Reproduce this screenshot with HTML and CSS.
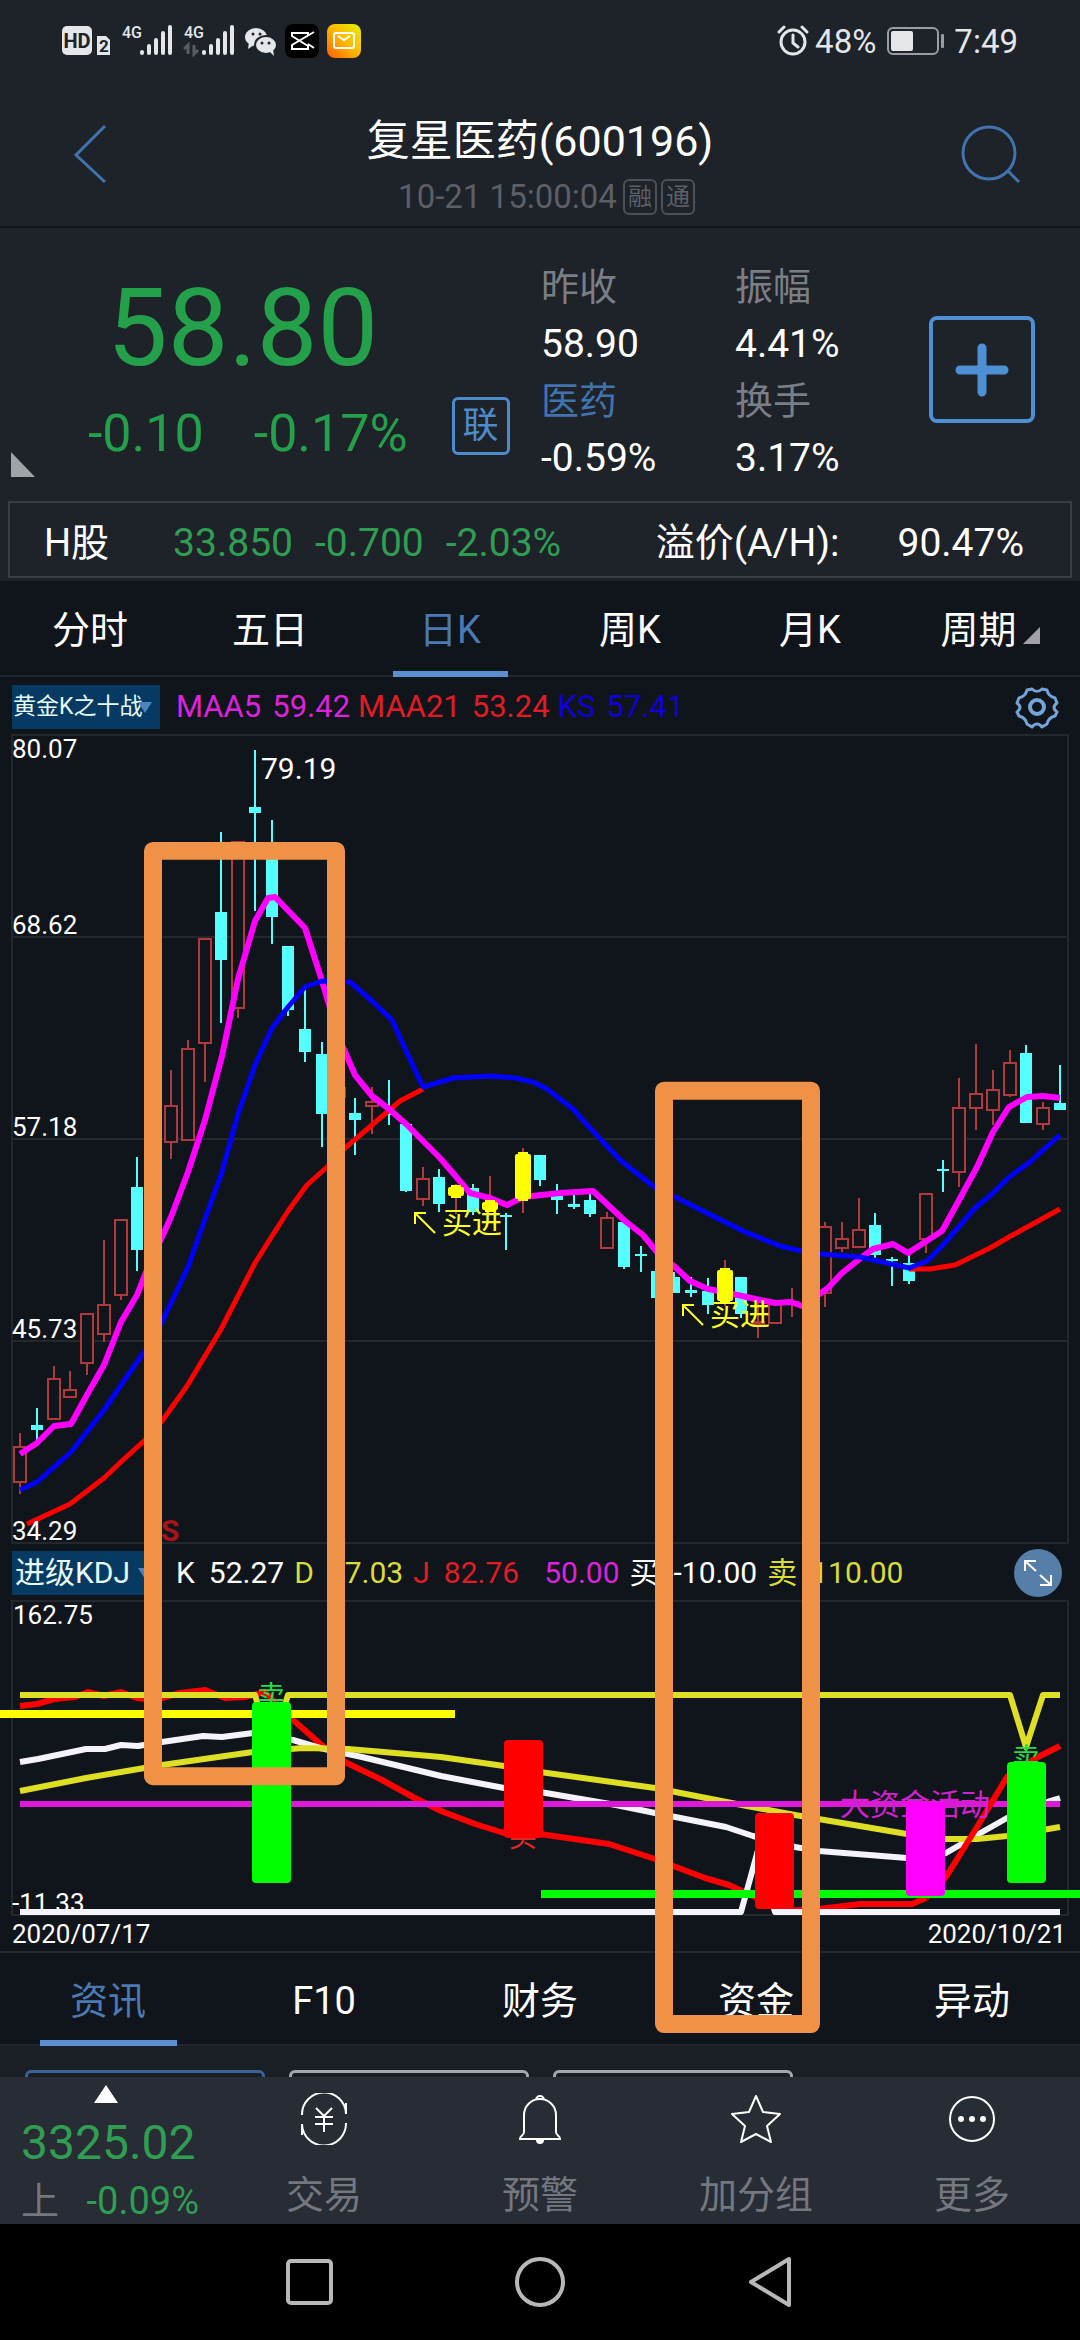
FILE: index.html
```html
<!DOCTYPE html>
<html lang="zh-CN">
<head>
<meta charset="utf-8">
<meta name="viewport" content="width=device-width">
<title>复星医药(600196)</title>
<link rel="stylesheet" href="styles.css">
</head>
<body>
<div class="statusbar">
  <div class="status-left">
    <svg width="50" height="34" viewBox="0 0 50 34" aria-hidden="true">
      <rect x="1" y="2" width="30" height="29" rx="5" fill="#e4e6ea"/>
      <text x="16" y="24" text-anchor="middle" font-size="20" font-weight="700" fill="#1e2229">HD</text>
      <path d="M36 12h9l4 4v15H36z" fill="#e4e6ea"/>
      <text x="43" y="28" text-anchor="middle" font-size="17" font-weight="700" fill="#1e2229">2</text>
    </svg>
    <svg class="signal" width="52" height="34" viewBox="0 0 52 34" aria-hidden="true">
      <text x="1" y="14" font-size="16" font-weight="500" fill="#e4e6ea">4G</text>
      <path d="M21 28v1M28 22v7M35 16v13M42 9v20M49 3v26" stroke="#e4e6ea" stroke-width="4" stroke-linecap="round"/>
    </svg>
    <svg class="signal" width="52" height="34" viewBox="0 0 52 34" aria-hidden="true">
      <text x="1" y="14" font-size="16" font-weight="500" fill="#e4e6ea">4G</text>
      <path d="M5 30V21l-4 4M11 21v9l4-4" stroke="#595d64" stroke-width="3" fill="none"/>
      <path d="M21 28v1M28 22v7M35 16v13M42 9v20M49 3v26" stroke="#e4e6ea" stroke-width="4" stroke-linecap="round"/>
    </svg>
    <svg width="32" height="34" viewBox="0 0 32 34" aria-hidden="true">
      <ellipse cx="11" cy="13" rx="11" ry="9" fill="#e4e6ea"/>
      <path d="M4 18l-1 7 6-4z" fill="#e4e6ea"/>
      <ellipse cx="21" cy="21" rx="11" ry="9" fill="#e4e6ea" stroke="#1e2229" stroke-width="2"/>
      <path d="M24 27l5 5-1-7z" fill="#e4e6ea"/>
      <circle cx="8" cy="10" r="1.500" fill="#1e2229"/><circle cx="15" cy="10" r="1.500" fill="#1e2229"/>
      <circle cx="17" cy="19" r="1.500" fill="#1e2229"/><circle cx="24" cy="19" r="1.500" fill="#1e2229"/>
    </svg>
    <svg class="app" width="34" height="34" viewBox="0 0 34 34" aria-hidden="true">
      <rect width="34" height="34" rx="8" fill="#000"/>
      <path d="M29 8L7 21v4h16v-3L7 12V9h16v3M23 20l6 4" fill="none" stroke="#fff" stroke-width="2"/>
    </svg>
    <svg class="app" width="34" height="34" viewBox="0 0 34 34" aria-hidden="true">
      <defs><linearGradient id="mail" x1="1" y1="0" x2="0" y2="1"><stop offset="0" stop-color="#e0f000"/><stop offset=".5" stop-color="#ffb800"/><stop offset="1" stop-color="#ff5a00"/></linearGradient></defs>
      <rect width="34" height="34" rx="8" fill="url(#mail)"/>
      <rect x="7" y="9" width="20" height="15" rx="2" fill="none" stroke="#fff" stroke-width="2"/>
      <path d="M11 12l6 4 6-4" fill="none" stroke="#fff" stroke-width="2"/>
    </svg>
  </div>
  <div class="status-right">
    <svg width="32" height="32" viewBox="0 0 32 32" fill="none" stroke="#e4e6ea" stroke-width="3" stroke-linecap="round" aria-hidden="true">
      <circle cx="16" cy="17" r="12"/><path d="M16 10v8l5 4M2 7l5-5M30 7l-5-5"/>
    </svg>
    <span>48%</span>
    <svg class="battery" width="58" height="28" viewBox="0 0 58 28" aria-hidden="true">
      <rect x="1" y="1" width="50" height="26" rx="5" fill="none" stroke="#9a9da3" stroke-width="2"/>
      <rect x="4" y="4" width="22" height="20" rx="2" fill="#e4e6ea"/>
      <rect x="54" y="7" width="3" height="14" rx="1" fill="#9a9da3"/>
    </svg>
    <span>7:49</span>
  </div>
</div>

<header class="header">
  <button class="icon-btn" aria-label="返回"><svg width="34" height="60" viewBox="0 0 34 60"><path d="M32 2L3 31l29 27" fill="none" stroke="#4173ad" stroke-width="3"/></svg></button>
  <div class="heading">
    <h1>复星医药(600196)</h1>
    <p class="stamp"><span>10-21 15:00:04</span><i class="tag">融</i><i class="tag">通</i></p>
  </div>
  <button class="icon-btn search" aria-label="搜索"><svg width="60" height="60" viewBox="0 0 60 60"><circle cx="29" cy="29" r="26" fill="none" stroke="#4173ad" stroke-width="3"/><path d="M48 47l11 11" stroke="#4173ad" stroke-width="3"/></svg></button>
</header>

<section class="quote">
  <div class="price-block">
    <div class="price">58.80</div>
    <div class="change"><span class="delta">-0.10</span><span class="percent">-0.17%</span><button class="link-btn">联</button></div>
    <svg class="corner" width="24" height="25" viewBox="0 0 24 25" aria-hidden="true"><path d="M0 0l24 25H0z" fill="#a0a3a8"/></svg>
  </div>
  <dl class="stats">
    <div><dt>昨收</dt><dd>58.90</dd></div>
    <div><dt>振幅</dt><dd>4.41%</dd></div>
    <div><dt><a href="#sector">医药</a></dt><dd>-0.59%</dd></div>
    <div><dt>换手</dt><dd>3.17%</dd></div>
  </dl>
  <button class="add-btn" aria-label="添加自选"><svg width="54" height="54" viewBox="0 0 54 54"><path d="M27 5v44M5 27h44" stroke="#4e8fd6" stroke-width="9" stroke-linecap="round"/></svg></button>
</section>

<div class="hshare-wrap">
  <div class="hshare">
    <span class="name">H股</span>
    <span class="down">33.850</span><span class="down">-0.700</span><span class="down">-2.03%</span>
    <span class="premium">溢价(A/H):</span><span class="ratio">90.47%</span>
  </div>
</div>

<nav class="tabs periods">
  <button>分时</button><button>五日</button><button class="active">日K</button><button>周K</button><button>月K</button>
  <button>周期<svg width="17" height="17" viewBox="0 0 17 17" aria-hidden="true"><path d="M17 0v17H0z" fill="#a3a0a8"/></svg></button>
</nav>

<div class="workspace">
  <div class="readout main-readout">
    <label class="picker"><select aria-label="主图指标"><option>黄金K之十战</option></select></label>
    <span class="value magenta"><b>MAA5</b><b>59.42</b></span>
    <span class="value red"><b>MAA21</b><b>53.24</b></span>
    <span class="value blue"><b>KS</b><b>57.41</b></span>
    <button class="gear" aria-label="设置"><svg width="46" height="46" viewBox="-23 -23 46 46" fill="none" stroke="#74a5d8" stroke-width="3" stroke-linejoin="round"><path d="M-5-18C-2-15 2-15 5-18L10-17C11-12 14-10 18-9L20-4C16-1 16 2 20 5L18 9C14 10 11 12 10 17L5 20C2 16-2 16-5 20L-10 17C-11 12-14 10-18 9L-20 5C-16 2-16-1-20-4L-18-9C-14-10-11-12-10-17Z"/><circle r="7" stroke-width="4"/></svg></button>
  </div>

  <svg class="chart" viewBox="0 732 1080 812" role="img" aria-label="日K线">
    <path class="grid" d="M12 735H1068V1543H12ZM12 937H1068M12 1139H1068M12 1341H1068"/>
    <g id="candles"></g>
    <polyline class="ma red" points="27,1524 70,1504 104,1478 123,1460 145,1440 162,1421 187,1386 220,1331 255,1263 272,1236 288,1211 307,1185 327,1167 345,1148 372,1125 400,1101 423,1089"/>
    <polyline class="ma red" points="909,1269 930,1269 955,1265 990,1248 1009,1237 1040,1220 1060,1209"/>
    <polyline class="ma magenta" points="20,1454 37,1443 54,1426 71,1424 88,1393 104,1365 121,1322 137,1295 150,1262 162,1237 171,1217 188,1172 205,1120 222,1056 238,979 255,921 268,898 275,897 305,928 322,981 339,1038 355,1075 372,1096 389,1109 406,1124 440,1158 470,1193 490,1198 507,1205 523,1197 560,1193 593,1191 625,1221 643,1235 657,1252 674,1266 690,1281 708,1289 724,1292 760,1300 775,1303 791,1302 802,1306 828,1288 842,1273 862,1257 873,1249 893,1244 908,1253 942,1231 958,1202 977,1167 993,1132 1009,1107 1027,1097 1043,1096 1060,1098"/>
    <polyline class="ma blue" points="20,1490 37,1482 71,1452 104,1410 121,1385 144,1352 162,1322 188,1267 205,1219 222,1172 238,1114 255,1065 272,1028 288,1007 305,987 322,981 350,982 372,1001 392,1020 407,1053 423,1087 453,1078 490,1076 515,1078 533,1082 547,1089 573,1109 590,1128 620,1160 653,1186 677,1198 743,1231 780,1246 797,1250 820,1254 860,1257 887,1263 909,1268 927,1261 943,1245 975,1208 993,1193 1009,1177 1030,1162 1043,1150 1060,1135"/>
    <g id="signals"></g>
    <g class="buy">
      <path d="M435 1233L415 1213M415 1224V1213H426M703 1325L683 1305M683 1316V1305H694"/>
      <text x="442" y="1233">买进</text><text x="710" y="1325">买进</text>
    </g>
    <text class="sell-mark" x="161" y="1541">S</text>
    <text class="peak" x="261" y="779">79.19</text>
    <g class="axis">
      <text x="12" y="758">80.07</text><text x="12" y="934">68.62</text><text x="12" y="1136">57.18</text><text x="12" y="1338">45.73</text><text x="12" y="1540">34.29</text>
    </g>
  </svg>

  <div class="readout sub-readout">
    <label class="picker"><select aria-label="副图指标"><option>进级KDJ</option></select></label>
    <span class="value white"><b>K</b><b>52.27</b></span>
    <span class="value yellow"><b>D</b><b>57.03</b></span>
    <span class="value red"><b>J</b><b>82.76</b></span>
    <span class="value magenta unnamed"><b>50.00</b></span>
    <span class="value white"><b>买</b><b>-10.00</b></span>
    <span class="value yellow"><b>卖</b><b>110.00</b></span>
    <button class="expand" aria-label="展开"><svg width="48" height="48" viewBox="0 0 48 48"><circle cx="24" cy="24" r="24" fill="#557fa8"/><path d="M22 22L11 12M11 22V12H22M26 26l11 10M37 26V36H26" fill="none" stroke="#fff" stroke-width="2"/></svg></button>
  </div>

  <svg class="chart" viewBox="0 1600 1080 318" role="img" aria-label="进级KDJ">
    <path class="grid" d="M12 1601H1068V1915H12Z"/>
    <g class="axis"><text x="13" y="1624">162.75</text><text x="12" y="1912">-11.33</text></g>
    <polyline class="osc red" points="20,1706 37,1704 54,1699 75,1697 88,1692 104,1696 121,1692 137,1698 154,1700 180,1693 205,1690 225,1698 245,1697 265,1692 293,1720 325,1748 347,1763 382,1780 413,1797 441,1811 475,1824 504,1833 540,1834 574,1839 609,1844 655,1859 705,1878 729,1885 755,1897 781,1911 819,1909 860,1904 912,1904 926,1898"/>
    <polyline class="osc white" points="20,1762 38,1759 86,1749 105,1749 121,1745 138,1746 162,1742 203,1736 222,1737 253,1733 293,1740 320,1748 362,1757 441,1776 504,1788 540,1792 616,1805 655,1813 726,1827 753,1836 795,1847 819,1851 907,1858 946,1853 977,1835 1007,1818 1050,1801 1060,1798"/>
    <polyline class="osc yellow" points="20,1791 86,1778 162,1765 253,1752 303,1748 348,1749 372,1751 441,1757 504,1766 540,1772 655,1788 747,1806 795,1815 907,1834 946,1839 977,1839 1007,1836 1060,1827"/>
    <polyline class="osc yellow" points="20,1695 255,1695 271,1750 288,1695 1010,1695 1026,1747 1043,1695 1060,1695"/>
    <polyline class="osc magenta" points="20,1804 1060,1804"/>
    <polyline class="osc white" points="20,1912 741,1912 758,1850 775,1912 1060,1912"/>
    <polyline class="osc red" points="926,1898 946,1877 977,1827 1007,1777 1036,1758 1060,1746"/>
    <path d="M0 1714H455" stroke="#ff0" stroke-width="8"/>
    <path d="M541 1894H1080" stroke="#0f0" stroke-width="8"/>
    <g class="osc-label">
      <text x="257" y="1706" fill="#22dd44">卖</text><text x="1012" y="1768" fill="#22dd44">卖</text>
      <text x="509" y="1847" fill="#e02828">买</text>
      <text class="funds" x="840" y="1815" fill="#d020d0">大资金活动</text>
    </g>
    <rect x="252" y="1702" width="39" height="181" rx="4" fill="#0f0"/>
    <rect x="504" y="1740" width="39" height="98" rx="4" fill="#f00"/>
    <rect x="755" y="1813" width="39" height="96" rx="4" fill="#f00"/>
    <rect x="906" y="1802" width="39" height="94" rx="4" fill="#f0f"/>
    <rect x="1007" y="1762" width="39" height="121" rx="4" fill="#0f0"/>
  </svg>

  <div class="dates"><time>2020/07/17</time><time>2020/10/21</time></div>

  <nav class="tabs info">
    <button class="active">资讯</button><button>F10</button><button>财务</button><button>资金</button><button>异动</button>
  </nav>

  <svg class="markup" viewBox="0 677 1080 1370" preserveAspectRatio="none" aria-hidden="true">
    <rect x="153" y="851" width="183" height="926"/><rect x="664" y="1091" width="147" height="934"/>
  </svg>
</div>

<div class="filters"><span class="chip active"></span><span class="chip"></span><span class="chip"></span></div>

<footer class="toolbar">
  <div class="index">
    <svg width="24" height="18" viewBox="0 0 24 18" aria-hidden="true"><path d="M12 0l12 18H0z" fill="#fff"/></svg>
    <strong>3325.02</strong>
    <p><span>上</span><span class="down">-0.09%</span></p>
  </div>
  <button><svg width="52" height="52" viewBox="0 0 52 52" fill="none" stroke="#fff" stroke-width="2"><path d="M4 22A22 22 0 0 1 48 21V10M48 30A22 22 0 0 1 4 31V42M18 15l8 8 8-8M26 23v16M17 24h18M17 31h18"/></svg>交易</button>
  <button><svg width="52" height="52" viewBox="0 0 52 52" fill="none" stroke="#fff" stroke-width="2"><path d="M10 39V22a16 16 0 0 1 32 0v17c0 4 4 3 4 7H6c0-4 4-3 4-7z"/><path d="M22 7a4 4 0 1 1 8 0"/><path d="M23 47a3 3 0 0 0 6 0z" fill="#fff"/></svg>预警</button>
  <button><svg width="52" height="52" viewBox="0 0 52 52" fill="none" stroke="#fff" stroke-width="2" stroke-linejoin="round"><path d="M26 3l7 16 17 2-13 12 4 16-15-8-15 8 4-16L2 21l17-2z"/></svg>加分组</button>
  <button><svg width="52" height="52" viewBox="0 0 52 52" fill="#fff"><circle cx="26" cy="26" r="22" fill="none" stroke="#fff" stroke-width="2"/><circle cx="15" cy="26" r="3"/><circle cx="26" cy="26" r="3"/><circle cx="37" cy="26" r="3"/></svg>更多</button>
</footer>

<nav class="system-nav">
  <button aria-label="最近任务"><svg width="50" height="54" viewBox="0 0 50 54"><rect x="3" y="6" width="43" height="42" rx="3"/></svg></button>
  <button aria-label="主屏幕"><svg width="50" height="54" viewBox="0 0 50 54"><circle cx="25" cy="27" r="23"/></svg></button>
  <button aria-label="返回上级"><svg width="50" height="54" viewBox="0 0 50 54"><path d="M44 4V50L6 27Z"/></svg></button>
</nav>
<script src="chart.js"></script>
</body>
</html>
```
FILE: styles.css
```css
* { box-sizing: border-box; }
body {
  margin: 0;
  min-height: 100vh;
  display: flex;
  flex-direction: column;
  background: #000;
  color: #fff;
  font-family: Roboto, "Noto Sans CJK SC", sans-serif;
  font-size: 38px;
}
button {
  margin: 0;
  padding: 0;
  border: 0;
  background: none;
  color: inherit;
  font: inherit;
}
svg { display: block; flex: none; }
a { color: inherit; text-decoration: none; }

.statusbar {
  display: flex;
  justify-content: space-between;
  height: 82px;
  padding: 0 62px 0 61px;
  background: #1e2229;
}
.status-left, .status-right { display: flex; align-items: center; }
.status-left { gap: 10px; }
.status-left .app { margin-left: -2px; }
.status-right { font-size: 33px; color: #e4e6ea; gap: 6px; }
.battery { margin: 0 3px 0 5px; }

.header {
  display: flex;
  justify-content: space-between;
  align-items: center;
  height: 146px;
  padding: 0 60px 0 73px;
  background: #1e2229;
  border-bottom: 2px solid #12151b;
}
.icon-btn { width: 60px; height: 60px; }
.heading { flex: 1; text-align: center; padding-top: 31px; align-self: flex-start; }
.heading h1 { margin: 0 13px 0 0; font-size: 43px; line-height: 56px; font-weight: 400; }
.stamp {
  display: flex;
  align-items: center;
  justify-content: center;
  gap: 4px;
  margin: 0;
  font-size: 33px;
  line-height: 56px;
  color: #5c5f66;
}
.tag {
  width: 34px;
  height: 36px;
  border: 2px solid #4d5057;
  border-radius: 6px;
  font-size: 24px;
  line-height: 32px;
  font-style: normal;
}
.stamp span { margin-right: 2px; }

.quote {
  display: flex;
  align-items: flex-start;
  height: 273px;
  background: #1e2229;
}
.price-block { position: relative; width: 50%; height: 100%; padding-top: 46px; color: #23a049; }
.price { padding-left: 107px; font-size: 108px; line-height: 108px; }
.change { display: flex; align-items: flex-end; margin-top: 15px; padding-left: 88px; font-size: 52px; line-height: 42px; }
.delta { margin-right: 50px; }
.percent { margin-right: 44px; }
.link-btn {
  width: 58px;
  height: 58px;
  border: 3px solid #4d8bcb;
  border-radius: 6px;
  color: #4d8bcb;
  font-size: 36px;
  line-height: 52px;
}
.corner { position: absolute; left: 11px; bottom: 24px; }
.stats {
  display: grid;
  grid-template-columns: 1fr 1fr;
  flex: 0 0 388px;
  margin: 0 0 0 1px;
  padding-top: 31px;
  line-height: 57px;
}
.stats dt { color: #7b7e85; }
.stats dt a { color: #4173ad; }
.stats dd { margin: 0; font-size: 39px; }
.add-btn {
  display: grid;
  place-items: center;
  width: 106px;
  height: 107px;
  margin: 88px 45px 0 auto;
  border: 4px solid #4e8fd6;
  border-radius: 8px;
}

.hshare-wrap { padding: 0 8px 3px; background: #1e2229; }
.hshare {
  display: flex;
  align-items: center;
  gap: 22px;
  height: 77px;
  padding: 6px 46px 0 34px;
  border: 2px solid #3a3e47;
  font-size: 39px;
  line-height: 48px;
}
.down { color: #2f9e52; }
.hshare .name { margin-right: 42px; font-size: 38px; }
.premium { margin-left: auto; margin-right: 36px; }

.tabs { display: flex; background: #10141b; line-height: 56px; }
.tabs button { position: relative; flex: 1; display: flex; justify-content: center; align-items: center; padding-top: 4px; }
.tabs .active { color: #4a7ab4; }
.tabs .active::after {
  content: "";
  position: absolute;
  bottom: -2px;
  width: 115px;
  height: 6px;
  background: #5b8fcf;
}
.periods { height: 96px; border-bottom: 2px solid #23262e; }
.periods svg { margin: 10px 0 0 6px; }
.info { height: 95px; border-top: 2px solid #23262e; border-bottom: 2px solid #23262e; }
.info .active::after { width: 137px; }

.workspace { position: relative; background: #10141b; }
.readout { display: flex; align-items: center; padding: 0 18px 0 12px; line-height: 44px; }
.main-readout { height: 55px; gap: 8px; padding-top: 4px; font-size: 31px; }
.sub-readout { height: 56px; gap: 10px; padding-top: 2px; font-size: 30px; }
.picker { position: relative; width: 148px; height: 44px; margin-right: 8px; }
.sub-readout .picker { margin-right: 6px; }
.picker::after {
  content: "";
  position: absolute;
  right: 8px;
  top: 17px;
  border: solid transparent;
  border-width: 11px 7px 0;
  border-top-color: #4a86bd;
}
.picker select {
  display: block;
  appearance: none;
  width: 100%;
  height: 100%;
  padding: 0 1px;
  border: 0;
  border-radius: 0;
  background: #063a63;
  color: #e8fbff;
  font: inherit;
  font-size: 23px;
}
.sub-readout .picker select { padding-left: 3px; font-size: 30px; }
.value { display: flex; gap: 11px; }
.sub-readout .value { gap: 14px; }
.value b { font-weight: 400; }
.value.unnamed { margin-left: 15px; }
.value.magenta { color: #dd22dd; }
.value.red { color: #e01c24; }
.value.blue { color: #1000d8; }
.value.white { color: #fff; }
.value.yellow { color: #d9dc38; }
.gear, .expand { margin-left: auto; }
.gear { margin-right: 2px; }

.chart { width: 100%; height: auto; overflow: visible; }
.grid { fill: none; stroke: #23282f; stroke-width: 2; }
.axis { font-size: 26px; fill: #fff; }
.peak { font-size: 30px; fill: #fff; }
.sell-mark { font-size: 30px; font-weight: 700; fill: #a81418; }
.up { fill: #10141b; stroke: #b0393d; stroke-width: 2; }
.fall { fill: #55ffff; stroke: #55ffff; stroke-width: 2; }
.buy-bar { fill: #ff0; }
.buy text { font-size: 30px; fill: #ffff22; }
.buy path { fill: none; stroke: #ffff22; stroke-width: 2; }
.ma, .osc { fill: none; stroke-linejoin: round; stroke-width: 5; }
.ma.magenta { stroke: #f0f; stroke-width: 6; }
.ma.blue { stroke: #00f; }
.ma.red, .osc.red { stroke: #f00; }
.osc { stroke-width: 6; }
.osc.white { stroke: #f4f2fa; }
.osc.yellow { stroke: #dede24; }
.osc.magenta { stroke: #dd18d8; }
.osc-label { font-size: 28px; }
.funds { font-size: 30px; }
.dates { display: flex; justify-content: space-between; padding: 0 14px 0 12px; font-size: 26px; line-height: 33px; }
.markup { position: absolute; inset: 0; width: 100%; height: 100%; pointer-events: none; }
.markup rect { fill: none; stroke: #f09148; stroke-width: 18; stroke-linejoin: round; }

.filters { display: flex; gap: 24px; height: 31px; padding: 24px 25px 0; overflow: hidden; background: #1a1e25; }
.chip { flex: 0 0 240px; height: 60px; border: 3px solid #a4a8ae; border-radius: 6px; }
.chip.active { border-color: #3a6299; }

.toolbar { display: grid; grid-template-columns: repeat(5, 1fr); height: 147px; background: #282c34; }
.toolbar button { display: flex; flex-direction: column; align-items: center; padding-top: 16px; line-height: 52px; color: #74777e; }
.toolbar button svg { margin-bottom: 24px; }
.index { display: flex; flex-direction: column; padding: 8px 17px 0 21px; color: #2f9e52; }
.index svg { align-self: center; margin-right: 8px; }
.index strong { font-size: 48px; line-height: 80px; font-weight: 400; }
.index p { display: flex; justify-content: space-between; margin: 0; line-height: 36px; color: #74777e; }

.system-nav { flex: 1; display: flex; justify-content: center; align-items: center; gap: 180px; min-height: 116px; background: #000; }
.system-nav svg { fill: none; stroke: #b8b8b8; stroke-width: 4; stroke-linejoin: round; }
```
FILE: chart.js
```js
// One row per trading day: kind, body top, body bottom, wick top, wick bottom.
// u = rising (hollow), d = falling (filled), b = buy signal, x = no bar.
const days = [
  ['u',1447,1482,1433,1494],['d',1426,1429,1408,1440],['u',1379,1419,1366,1419],['u',1390,1397,1371,1397],
  ['u',1314,1363,1314,1375],['u',1305,1334,1240,1342],['u',1220,1295,1220,1300],['d',1188,1249,1157,1271],
  ['x'],['u',1106,1142,1070,1159],['u',1049,1140,1040,1140],['u',939,1043,939,1082],
  ['d',913,959,832,1023],['u',842,1008,842,1018],['d',808,812,750,911],['d',852,916,820,944],
  ['d',947,1009,947,1016],['d',1030,1051,985,1062],['d',1055,1113,1042,1147],['u',1088,1097,1080,1104],
  ['d',1114,1119,1098,1155],['u',1102,1106,1087,1134],['d',1113,1114,1080,1125],['d',1125,1190,1124,1192],
  ['u',1179,1199,1167,1206],['d',1178,1203,1169,1212],['b',1187,1196,1184,1214],['d',1189,1211,1184,1215],
  ['b',1202,1210,1176,1212],['d',1216,1216,1213,1250],['b',1154,1199,1148,1213],['d',1156,1179,1155,1186],
  ['d',1197,1199,1184,1214],['d',1205,1206,1193,1209],['d',1201,1213,1193,1217],['u',1218,1248,1212,1248],
  ['d',1223,1266,1222,1269],['d',1255,1255,1246,1272],['d',1272,1297,1272,1298],['d',1278,1292,1272,1293],
  ['d',1291,1292,1277,1297],['d',1292,1304,1278,1314],['b',1270,1301,1260,1306],['d',1278,1313,1277,1318],
  ['u',1322,1324,1297,1338],['u',1302,1323,1302,1324],['u',1302,1304,1288,1317],['x'],
  ['u',1227,1293,1222,1307],['u',1239,1248,1222,1252],['u',1230,1247,1198,1248],['d',1226,1254,1213,1258],
  ['d',1260,1260,1257,1286],['d',1264,1280,1255,1284],['u',1194,1239,1194,1253],['d',1170,1170,1160,1192],
  ['u',1108,1172,1078,1187],['u',1094,1108,1044,1130],['u',1090,1110,1070,1125],['u',1063,1095,1050,1097],
  ['d',1054,1122,1045,1123],['u',1108,1124,1102,1130],['d',1104,1109,1065,1110]
];

const layer = document.getElementById('candles');
const signals = document.getElementById('signals');

function add(parent, name, cls, attrs) {
  const el = document.createElementNS('http://www.w3.org/2000/svg', name);
  el.setAttribute('class', cls);
  for (const key in attrs) el.setAttribute(key, attrs[key]);
  parent.appendChild(el);
}

days.forEach(([kind, top, bottom, high, low], i) => {
  if (kind === 'x') return;
  const x = Math.round(20 + i * 1040 / (days.length - 1));
  const cls = kind === 'd' ? 'fall' : 'up';
  add(layer, 'path', cls, { d: `M${x} ${high}V${low}` });
  if (kind === 'b') {
    add(signals, 'rect', 'buy-bar', { x: x - 8, y: top, width: 16, height: bottom - top, rx: 2 });
    add(signals, 'rect', 'buy-bar', { x: x - 5, y: top - 2, width: 10, height: bottom - top + 4 });
  } else {
    const half = kind === 'd' ? 5 : 6;
    add(layer, 'rect', cls, { x: x - half, y: top, width: half * 2, height: bottom - top });
    if (bottom === top) add(layer, 'path', cls, { d: `M${x - 6} ${top}H${x + 6}` });
  }
});
```
